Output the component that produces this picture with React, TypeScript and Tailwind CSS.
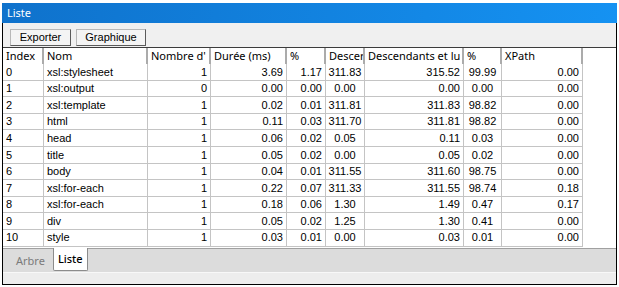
const cols = [
  { label: "Index", w: 41, align: "left" },
  { label: "Nom", w: 104, align: "left" },
  { label: "Nombre d'", w: 63, align: "right" },
  { label: "Durée (ms)", w: 76, align: "right" },
  { label: "%", w: 39, align: "right" },
  { label: "Descer", w: 39, align: "center" },
  { label: "Descendants et lu", w: 99, align: "right" },
  { label: "%", w: 38, align: "center" },
  { label: "XPath", w: 81, align: "right" },
];

const rows = [
  ["0", "xsl:stylesheet", "1", "3.69", "1.17", "311.83", "315.52", "99.99", "0.00"],
  ["1", "xsl:output", "0", "0.00", "0.00", "0.00", "0.00", "0.00", "0.00"],
  ["2", "xsl:template", "1", "0.02", "0.01", "311.81", "311.83", "98.82", "0.00"],
  ["3", "html", "1", "0.11", "0.03", "311.70", "311.81", "98.82", "0.00"],
  ["4", "head", "1", "0.06", "0.02", "0.05", "0.11", "0.03", "0.00"],
  ["5", "title", "1", "0.05", "0.02", "0.00", "0.05", "0.02", "0.00"],
  ["6", "body", "1", "0.04", "0.01", "311.55", "311.60", "98.75", "0.00"],
  ["7", "xsl:for-each", "1", "0.22", "0.07", "311.33", "311.55", "98.74", "0.18"],
  ["8", "xsl:for-each", "1", "0.18", "0.06", "1.30", "1.49", "0.47", "0.17"],
  ["9", "div", "1", "0.05", "0.02", "1.25", "1.30", "0.41", "0.00"],
  ["10", "style", "1", "0.03", "0.01", "0.00", "0.03", "0.01", "0.00"],
];

const alignClass: Record<string, string> = {
  left: "justify-start pl-[3px]",
  right: "justify-end pr-[3px]",
  center: "justify-center",
};

const App = () => {
  return (
    <div className="w-[619px] h-[287px] bg-white pt-[3px] pl-[2px] font-['Liberation_Sans',Arial,sans-serif]">
      <div className="w-[615px] h-[282px] border-x border-b border-black flex flex-col">
        {/* titre */}
        <div className="h-[20px] shrink-0 bg-gradient-to-r from-[#0f72cc] to-[#1592f2] flex items-center pl-[5px] -mx-px">
          <span className="text-white text-[11px] font-['Noto_Sans',sans-serif]">Liste</span>
        </div>

        {/* barre d'outils */}
        <div className="h-[24px] shrink-0 bg-[#f0f0f0] flex items-end gap-[5px] pl-[7px] pb-[1px]">
          <button className="w-[61px] h-[17px] bg-[#f4f4f4] border border-[#b8b8b8] border-r-[#5a5a5a] border-b-[#5a5a5a] text-[11px] leading-none text-black">
            Exporter
          </button>
          <button className="w-[70px] h-[17px] bg-[#f4f4f4] border border-[#b8b8b8] border-r-[#5a5a5a] border-b-[#5a5a5a] text-[11px] leading-none text-black">
            Graphique
          </button>
        </div>

        {/* liste */}
        <div className="flex-1 bg-white border-t border-[#3c3c3c] overflow-hidden">
          <div className="flex h-[16px] font-['Noto_Sans',sans-serif] text-[11px] text-black">
            {cols.map((c, i) => (
              <div
                key={i}
                style={{ width: c.w }}
                className="shrink-0 flex items-center pl-[3px] border-r-2 border-[#ababab] overflow-hidden whitespace-nowrap"
              >
                {c.label}
              </div>
            ))}
          </div>
          {rows.map((r, ri) => (
            <div key={ri} className="flex h-[16.6px] text-[11px] text-black">
              {r.map((v, ci) => (
                <div
                  key={ci}
                  style={{ width: cols[ci].w }}
                  className={`shrink-0 flex items-center border-r border-b border-[#c4c4c4] overflow-hidden whitespace-nowrap ${alignClass[cols[ci].align]}`}
                >
                  {v}
                </div>
              ))}
            </div>
          ))}
        </div>

        {/* onglets */}
        <div className="h-[24px] shrink-0 bg-[#dcdcdc] border-t border-[#a0a0a0] flex items-start pl-[13px] gap-[8px] font-['Noto_Sans',sans-serif] text-[11px]">
          <span className="pt-[4px] text-[#7a7a7a]">Arbre</span>
          <div className="h-[23px] px-[4px] bg-white border-x border-b border-[#8c8c8c] rounded-b-[2px] flex items-center -mt-px font-medium text-black">
            Liste
          </div>
        </div>
        <div className="h-[12px] shrink-0 bg-[#ededed] border-t border-[#f8f8f8]" />
      </div>
    </div>
  );
};

export default App;
